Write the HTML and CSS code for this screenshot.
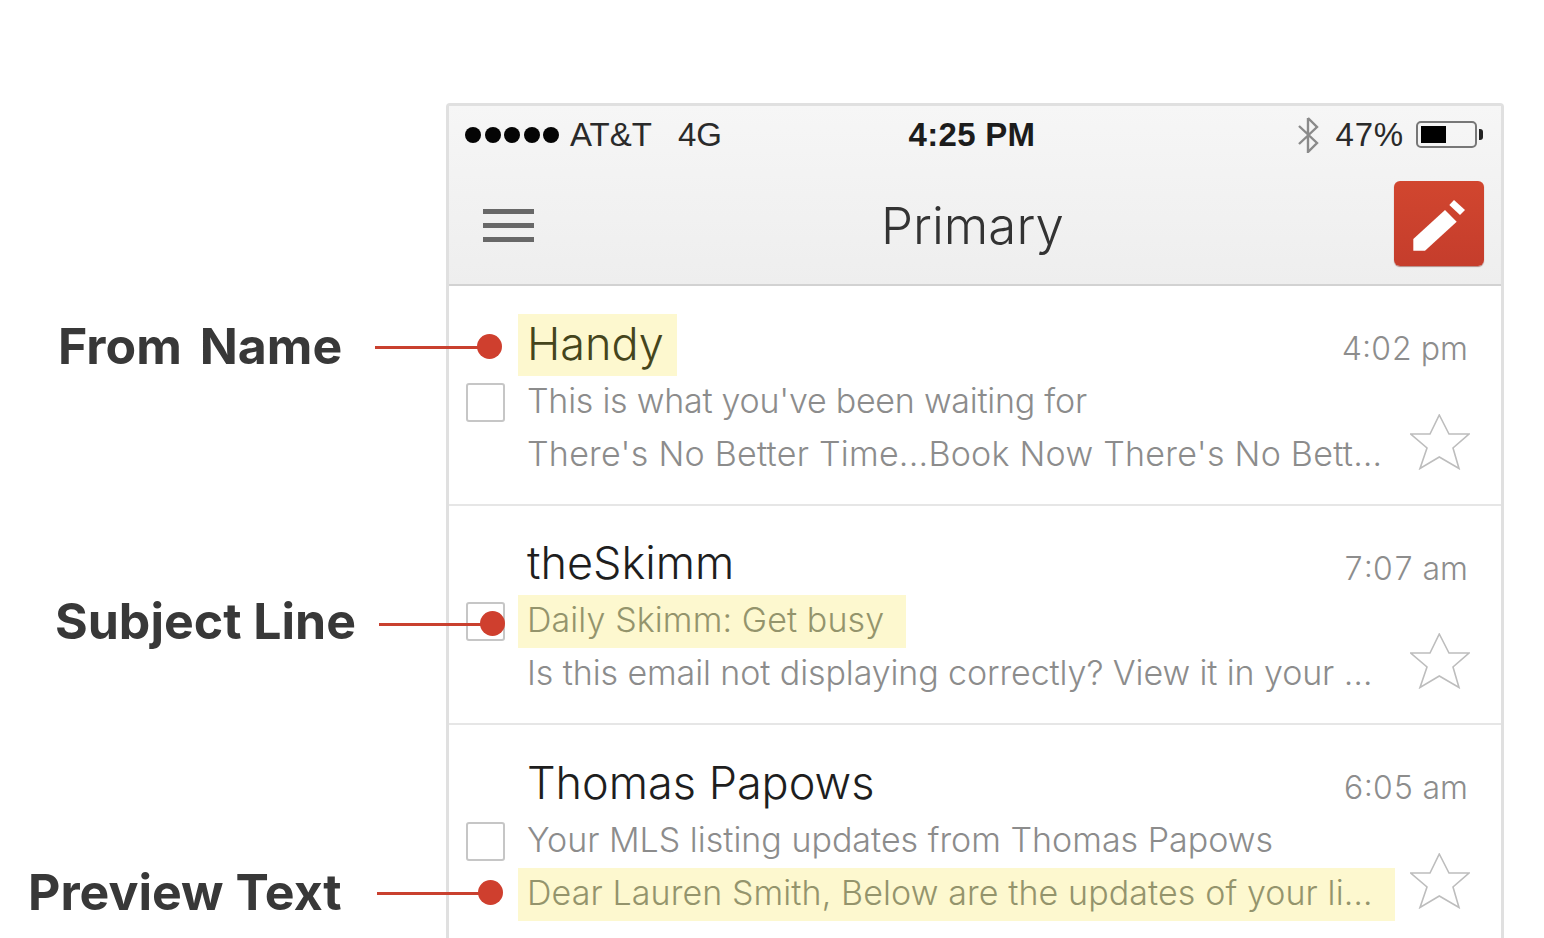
FILE: index.html
```html
<!DOCTYPE html>
<html lang="en">
<head>
<meta charset="utf-8">
<title>Primary inbox</title>
<link rel="stylesheet" href="styles.css">
</head>
<body>
<main class="stage">
  <section class="phone">
    <header class="chrome">
      <div class="status">
        <div class="status-left">
          <span class="signal"><i></i><i></i><i></i><i></i><i></i></span>
          <span>AT&amp;T</span>
          <span class="net">4G</span>
        </div>
        <div class="clock">4:25 PM</div>
        <div class="status-right">
          <svg class="bt" viewBox="0 0 22 36"><path d="M11 1V35L20 26L2 9M11 1L20 10L2 27" /></svg>
          <span class="pct">47%</span>
          <span class="battery"><b></b></span>
        </div>
      </div>
      <div class="nav">
        <span class="burger"><i></i><i></i><i></i></span>
        <h1 class="title">Primary</h1>
        <span class="compose">
          <svg viewBox="0 0 90 85"><path d="M19.3 58L51 29L62.7 40.7L31 69.7H19.3Z"/><path d="M60 19L71 29L66 34L55.3 24Z"/></svg>
        </span>
      </div>
    </header>

    <article class="mail">
      <div class="cell-name"><span class="name hl">Handy</span></div>
      <div class="time">4:02 pm</div>
      <span class="check"></span>
      <div class="line tight">This is what you've been waiting for</div>
      <div class="line wide">There's No Better Time...Book Now There's No Bett…</div>
      <svg class="star" viewBox="0 0 60 56"><path d="M29.3 1L39 20H59L43 34L49 54.5L29.3 43L10 54.5L17 34L.7 20H20Z"/></svg>
    </article>

    <article class="mail">
      <div class="cell-name"><span class="name">theSkimm</span></div>
      <div class="time">7:07 am</div>
      <span class="check"></span>
      <div class="line"><span class="hl">Daily Skimm: Get busy</span></div>
      <div class="line snug">Is this email not displaying correctly? View it in your …</div>
      <svg class="star" viewBox="0 0 60 56"><path d="M29.3 1L39 20H59L43 34L49 54.5L29.3 43L10 54.5L17 34L.7 20H20Z"/></svg>
    </article>

    <article class="mail">
      <div class="cell-name"><span class="name">Thomas Papows</span></div>
      <div class="time">6:05 am</div>
      <span class="check"></span>
      <div class="line">Your MLS listing updates from Thomas Papows</div>
      <div class="line"><span class="hl fill">Dear Lauren Smith, Below are the updates of your li…</span></div>
      <svg class="star" viewBox="0 0 60 56"><path d="M29.3 1L39 20H59L43 34L49 54.5L29.3 43L10 54.5L17 34L.7 20H20Z"/></svg>
    </article>
  </section>

  <div class="note note-from"><span class="label">From Name</span><span class="rule"></span><span class="dot"></span></div>
  <div class="note note-subject"><span class="label">Subject Line</span><span class="rule"></span><span class="dot"></span></div>
  <div class="note note-preview"><span class="label">Preview Text</span><span class="rule"></span><span class="dot"></span></div>
</main>
</body>
</html>
```

FILE: styles.css
```css
* { box-sizing: border-box; }
html, body { margin: 0; height: 100%; background: #fff; overflow: hidden; }
body { font-family: "Inter", "Liberation Sans", sans-serif; font-weight: 300; }

.stage { position: relative; width: 1544px; height: 938px; padding: 103px 0 0 446px; overflow: hidden; }

.phone {
  width: 1058px;
  height: 900px;
  border: 3px solid #e0e0e0;
  border-bottom: 0;
  border-radius: 4px 4px 0 0;
  background: #fff;
}

.chrome {
  height: 180px;
  background: linear-gradient(#f6f6f6, #eeeeee);
  border-bottom: 2px solid #d2d2d2;
  color: #222;
}

.status {
  display: grid;
  grid-template-columns: 1fr auto 1fr;
  align-items: center;
  height: 58px;
  padding: 0 17px 0 16px;
  font-size: 33px;
  font-family: "Liberation Sans", sans-serif;
  font-weight: 400;
  color: #2a2a2a;
}
.status-left { display: flex; align-items: center; }
.signal { display: flex; gap: 3.5px; margin-right: 11px; }
.signal i { width: 16px; height: 16px; border-radius: 50%; background: #050505; }
.net { margin-left: 26px; }
.clock { font-weight: 700; font-size: 33px; color: #1c1c1c; letter-spacing: .3px; margin-right: 5px; }
.status-right { display: flex; align-items: center; justify-content: flex-end; }
.bt { width: 22px; height: 36px; margin-right: 17px; margin-left: -2px; fill: none; stroke: #8a8a8a; stroke-width: 2.4; }
.pct { letter-spacing: .8px; }
.battery {
  position: relative;
  width: 61px;
  height: 27px;
  margin: -1px 7px 0 12px;
  padding: 3px;
  border: 2px solid #777;
  border-radius: 5px;
}
.battery b { display: block; width: 25px; height: 100%; background: #000; }
.battery::after {
  content: "";
  position: absolute;
  right: -8px;
  top: 6px;
  width: 4px;
  height: 11px;
  background: #222;
  border-radius: 0 3px 3px 0;
}

.nav {
  display: grid;
  grid-template-columns: 1fr auto 1fr;
  align-items: center;
  height: 119px;
  padding: 17px 17px 17px 34px;
}
.burger { display: flex; flex-direction: column; gap: 9px; width: 51px; margin-top: 3px; }
.burger i { display: block; height: 5px; background: #686868; }
.title { margin: 3px 22px 0 0; font-size: 51px; font-weight: 300; color: #333; }
.compose {
  justify-self: end;
  width: 90px;
  height: 85px;
  border-radius: 6px;
  background: linear-gradient(#d1462f, #c53d2c);
  box-shadow: 0 1px 1px rgba(120, 40, 30, .5);
}
.compose svg { display: block; width: 90px; height: 85px; fill: #fff; }

.mail {
  display: grid;
  grid-template-columns: 69px 877px minmax(0, 1fr);
  grid-template-rows: 62px 53px 53px;
  align-content: start;
  height: 219.7px;
  padding-top: 27.5px;
  border-bottom: 2px solid #e6e6e6;
  align-items: center;
}
.cell-name { grid-column: 2; grid-row: 1; }
.name { display: inline-block; height: 62px; line-height: 59px; font-size: 45px; color: #1e1e1e; padding: 0 9px; white-space: nowrap; }
.time { grid-column: 3; grid-row: 1; justify-self: end; padding: 8px 33px 0 0; font-size: 32px; font-variant-numeric: tabular-nums; color: #8d8d8d; white-space: nowrap; }
.check { grid-column: 1; grid-row: 2; justify-self: start; margin-left: 17px; width: 39px; height: 39px; border: 2px solid #c6c6c6; border-radius: 3px; }
.line { grid-column: 2; font-size: 34px; line-height: 50px; height: 53px; color: #8c8c8c; white-space: nowrap; padding-left: 9px; }
.line.tight { letter-spacing: -.25px; }
.line.wide { letter-spacing: .25px; }
.line.snug { letter-spacing: -.1px; }
.line:has(.hl) { padding-left: 0; }
.hl { display: inline-block; background: #fdf8cf; color: inherit; }
.line .hl { height: 53px; padding: 0 22px 0 9px; color: #94946c; letter-spacing: .1px; }
.name.hl { color: #45451c; width: 159px; }
.line .hl.fill { width: 877px; padding-right: 0; }
.star { grid-column: 3; grid-row: 2 / 4; justify-self: end; margin: 26px 31px 0 0; width: 60px; height: 56px; fill: none; stroke: #bdbdbd; stroke-width: 1.6; }

.note { position: absolute; display: flex; align-items: center; height: 60px; }
.label { font-family: "Inter", "Liberation Sans", sans-serif; font-weight: 700; font-size: 50px; color: #383838; white-space: nowrap; margin-top: -3px; }
.rule { height: 3px; background: #c9402f; }
.dot { width: 25px; height: 25px; border-radius: 50%; background: #cf3f2e; margin-left: -1px; margin-top: -2px; }
.note-from { left: 58px; top: 317px; word-spacing: 6px; }
.note-from .label { width: 317px; }
.note-from .rule { width: 103px; }
.note-subject { left: 55px; top: 594px; }
.note-subject .label { width: 324px; margin-top: -7px; }
.note-subject .rule { width: 102px; }
.note-preview { left: 28px; top: 863px; }
.note-preview .label { width: 349px; }
.note-preview .rule { width: 102px; }
```
